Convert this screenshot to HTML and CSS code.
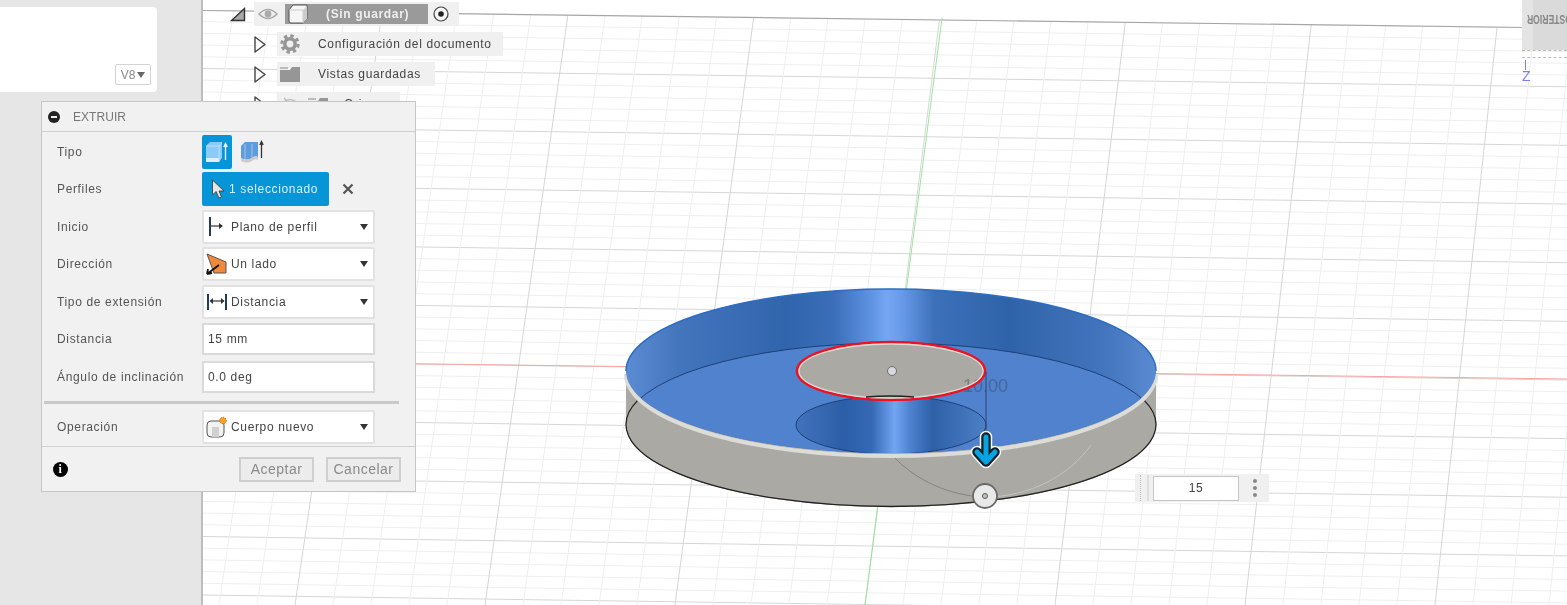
FILE: index.html
```html
<!DOCTYPE html>
<html lang="es">
<head>
  <meta charset="UTF-8">
  <title>Extruir</title>
  <link rel="stylesheet" href="styles.css">
</head>
<body>
  <div class="app">
    <aside class="sidebar">
      <div class="thumb">
        <div class="version">V8<span class="caret-small"></span></div>
      </div>
    </aside>

    <main class="canvas">
      <svg class="scene" width="1364" height="605" viewBox="203 0 1364 605">
        <defs>
          <clipPath id="gridClip"><polygon points="203,10.5 1567,28 1567,605 203,605"/></clipPath>
          <clipPath id="rimClip"><ellipse cx="891" cy="371" rx="265" ry="82"/></clipPath>
          <linearGradient id="wall" gradientUnits="userSpaceOnUse" x1="627" y1="0" x2="1157" y2="0">
            <stop offset="0" stop-color="#5b8bd3"/>
            <stop offset="0.1" stop-color="#4375bd"/>
            <stop offset="0.3" stop-color="#3064ab"/>
            <stop offset="0.39" stop-color="#3a6eb8"/>
            <stop offset="0.46" stop-color="#5e93e2"/>
            <stop offset="0.49" stop-color="#74a6f3"/>
            <stop offset="0.52" stop-color="#669ae8"/>
            <stop offset="0.58" stop-color="#3c70b9"/>
            <stop offset="0.72" stop-color="#2f63a9"/>
            <stop offset="0.9" stop-color="#4275bd"/>
            <stop offset="1" stop-color="#5b8bd3"/>
          </linearGradient>
          <linearGradient id="bore" gradientUnits="userSpaceOnUse" x1="796" y1="0" x2="986" y2="0">
            <stop offset="0" stop-color="#4272bb"/>
            <stop offset="0.25" stop-color="#2c5ea8"/>
            <stop offset="0.4" stop-color="#3569b5"/>
            <stop offset="0.52" stop-color="#72a5f2"/>
            <stop offset="0.6" stop-color="#4e82d0"/>
            <stop offset="0.72" stop-color="#2e60a8"/>
            <stop offset="1" stop-color="#4e80c6"/>
          </linearGradient>
        </defs>

        <g id="grid" clip-path="url(#gridClip)"></g>
        <line x1="203" y1="10.5" x2="1567" y2="28" class="grid-top"/>
        <line x1="203" y1="361" x2="1567" y2="379" class="axis-red"/>
        <line x1="942" y1="18" x2="865" y2="605" class="axis-green"/>

        <!-- cuerpo -->
        <path class="body" d="M626 371 V425 A265 82 0 0 0 1156 425 V371 Z"/>
        <ellipse class="body" cx="891" cy="425" rx="265" ry="82"/>
        <path class="body-edge" d="M637.5 400.6 A265 82 0 1 0 1144.5 400.6"/>
        <path class="sweep-dark" d="M893 456 C915 480 950 496 985 497"/>
        <path class="sweep" d="M985 497 C1030 497 1070 475 1091 445"/>

        <!-- extrusion -->
        <path class="rim-light" d="M626 374 A265 82 0 0 0 1156 374"/>
        <ellipse cx="891" cy="371" rx="265" ry="82" fill="url(#wall)"/>
        <g clip-path="url(#rimClip)">
          <ellipse class="floor" cx="891" cy="425" rx="265" ry="82"/>
          <ellipse class="bore" cx="891" cy="425" rx="95" ry="29" fill="url(#bore)"/>
        </g>
        <path class="rim" d="M626 371 A265 82 0 0 1 1156 371"/>

        <!-- agujero -->
        <ellipse class="hole" cx="891" cy="371" rx="94" ry="29"/>
        <text x="963" y="392" class="dimension">10.00</text>
        <ellipse class="hole-ring" cx="891" cy="371" rx="94" ry="29"/>
        <ellipse class="hole-inner" cx="891" cy="371" rx="92" ry="27"/>
        <path class="hole-shadow" d="M866 397 Q890 395 914 397"/>
        <circle class="center-dot" cx="892" cy="371" r="4.5"/>

        <!-- cota y manipulador -->
        <line x1="986" y1="372" x2="986" y2="432" class="dimension-line"/>
        <path class="arrow-halo" d="M986 437 V460 M977 452 L986 462 L995 452"/>
        <path class="arrow-line" d="M986 437 V460 M977 452 L986 462 L995 452"/>
        <path class="arrow" d="M986 437 V460 M977 452 L986 462 L995 452"/>
        <circle class="knob" cx="985" cy="496" r="12"/>
        <circle class="knob-dot" cx="985" cy="496" r="2.6"/>
      </svg>

      <ul class="tree">
        <li class="tree-row tree-root">
          <svg class="tw-open" width="16" height="15" viewBox="0 0 16 15"><path d="M14.5 1.5 V13.5 H1.5 Z" fill="#a8a8a8" stroke="#333" stroke-width="1.4"/></svg>
          <div class="chip">
            <svg width="20" height="14" viewBox="0 0 20 14"><path d="M1 7 Q10 -2 19 7 Q10 16 1 7 Z" fill="none" stroke="#aaa" stroke-width="1.6"/><circle cx="10" cy="7" r="3.4" fill="#aaa"/></svg>
            <div class="root-name">
              <svg width="24" height="20" viewBox="0 0 24 20"><path d="M4 6 L8 1 H22 V15 L18 19 H6 Q4 19 4 17 Z" fill="#f6f6f6" stroke="#555"/><path d="M18 6 H22 V2 Z M18 6 V19 L22 15 V6 Z" fill="#ccc"/><path d="M4 6 H18 V19" fill="none" stroke="#ccc"/></svg>
              <span>(Sin guardar)</span>
            </div>
            <svg class="radio" width="16" height="16" viewBox="0 0 16 16"><circle cx="8" cy="8" r="7" fill="#f6f6f6" stroke="#444" stroke-width="1.2"/><circle cx="8" cy="8" r="2.8" fill="#222"/></svg>
          </div>
        </li>
        <li class="tree-row">
          <svg class="tw" width="12" height="17" viewBox="0 0 12 17"><path d="M1 1 L11 8.5 L1 16 Z" fill="#fff" stroke="#444" stroke-width="1.4" stroke-linejoin="round"/></svg>
          <div class="chip">
            <svg class="node-icon" width="20" height="20" viewBox="0 0 20 20"><circle cx="10" cy="10" r="5.2" fill="none" stroke="#969696" stroke-width="3.6"/><circle cx="10" cy="10" r="8.2" fill="none" stroke="#969696" stroke-width="3" stroke-dasharray="3.4 3.04"/></svg>
            <span>Configuración del documento</span>
          </div>
        </li>
        <li class="tree-row">
          <svg class="tw" width="12" height="17" viewBox="0 0 12 17"><path d="M1 1 L11 8.5 L1 16 Z" fill="#fff" stroke="#444" stroke-width="1.4" stroke-linejoin="round"/></svg>
          <div class="chip chip-views">
            <svg class="node-icon" width="20" height="16" viewBox="0 0 20 16"><path d="M0 1 H8 V3 H0 Z" fill="#bbb"/><path d="M0 4 H10 L12 1 H20 V16 H0 Z" fill="#969696"/></svg>
            <span>Vistas guardadas</span>
          </div>
        </li>
        <li class="tree-row">
          <svg class="tw" width="12" height="17" viewBox="0 0 12 17"><path d="M1 1 L11 8.5 L1 16 Z" fill="#fff" stroke="#444" stroke-width="1.4" stroke-linejoin="round"/></svg>
          <div class="chip chip-origin">
            <svg width="20" height="14" viewBox="0 0 20 14"><path d="M1 7 Q10 -2 19 7 Q10 16 1 7 Z M4 1 L16 13" fill="none" stroke="#bbb" stroke-width="1.2"/></svg>
            <svg width="20" height="14" viewBox="0 0 20 14"><path d="M0 1 H8 V3 H0 Z" fill="#bbb"/><path d="M0 4 H10 L12 1 H20 V14 H0 Z" fill="#969696"/></svg>
            <span>Origen</span>
          </div>
        </li>
      </ul>

      <div class="viewcube">
        <div class="cube-face"><span>POSTERIOR</span></div>
        <div class="cube-foot"></div>
        <div class="cube-z"><i></i>Z</div>
      </div>

      <div class="quick-input">
        <div class="grip"></div>
        <div class="quick-field">15</div>
        <div class="quick-dots"><i></i><i></i><i></i></div>
      </div>
    </main>

    <section class="dialog">
      <header class="dialog-head">
        <span class="collapse"></span>
        <span>EXTRUIR</span>
      </header>

      <div class="dialog-body">
        <div class="row">
          <label>Tipo</label>
          <div class="field tipo">
            <button class="tool-btn">
              <svg width="24" height="24" viewBox="0 0 24 24"><path d="M1 6 L5 2 H17 V18 L14 22 H1 Z" fill="#8ccbf8"/><path d="M1 18 H14 V22 H1 Z" fill="#dff1fc"/><path d="M14 6 H1 M14 6 V22 M14 6 L17 2" fill="none" stroke="#c5e6fa" stroke-width="0.8"/><path d="M20.5 20 V5 M18.8 7 L20.5 3.5 L22.2 7" fill="none" stroke="#fff" stroke-width="1.3"/></svg>
            </button>
            <svg class="tool-off" width="24" height="24" viewBox="0 0 24 24"><path d="M1 6 L5 2 H18 V17 Q15 15 12 18 Q7 21 1 18 Z" fill="#5f9cdd"/><path d="M1 18 Q7 21 12 18 Q15 15 18 17 V20 Q15 18 12 21 Q7 24 1 21 Z" fill="#ccc"/><path d="M5 4 V19 M12 4 V18" stroke="#9cc6ef"/><path d="M21.5 18 V3 M19.8 5 L21.5 1.5 L23.2 5" fill="none" stroke="#333" stroke-width="1.3"/></svg>
          </div>
        </div>

        <div class="row">
          <label>Perfiles</label>
          <div class="field">
            <button class="picked">
              <svg width="14" height="20" viewBox="0 0 14 20"><path d="M1.5 1 V16 L5 12.5 L8 19 L10.5 18 L8 12 H13 Z" fill="#e6e6e6" stroke="#444" stroke-width="0.9"/></svg>
              <span>1 seleccionado</span>
            </button>
            <svg class="clear" width="12" height="12" viewBox="0 0 12 12"><path d="M1.5 1.5 L10.5 10.5 M10.5 1.5 L1.5 10.5" stroke="#555" stroke-width="2.2"/></svg>
          </div>
        </div>

        <div class="row">
          <label>Inicio</label>
          <div class="select">
            <svg width="22" height="22" viewBox="0 0 22 22"><path d="M4 1 V20" stroke="#1f3a68" stroke-width="2"/><path d="M5 10 H14" stroke="#333" stroke-width="1.2"/><path d="M13 7 L17 10 L13 13 Z" fill="#333"/></svg>
            <span>Plano de perfil</span>
            <i class="caret"></i>
          </div>
        </div>

        <div class="row">
          <label>Dirección</label>
          <div class="select">
            <svg width="22" height="22" viewBox="0 0 22 22"><path d="M1 1 L20 9 V20 H8 Z" fill="#f0893c" stroke="#555"/><path d="M1 21 L13 12 M1 21 L2 16 M1 21 L6 20" fill="none" stroke="#111" stroke-width="1.8"/></svg>
            <span>Un lado</span>
            <i class="caret"></i>
          </div>
        </div>

        <div class="row">
          <label>Tipo de extensión</label>
          <div class="select">
            <svg width="22" height="22" viewBox="0 0 22 22"><path d="M2 3 V19 M20 3 V19" stroke="#1f3a68" stroke-width="2"/><path d="M4 10 H18" stroke="#333" stroke-width="1.2"/><path d="M7 7 L3.5 10 L7 13 Z M15 7 L18.5 10 L15 13 Z" fill="#333"/></svg>
            <span>Distancia</span>
            <i class="caret"></i>
          </div>
        </div>

        <div class="row">
          <label>Distancia</label>
          <div class="input">15 mm</div>
        </div>

        <div class="row">
          <label>Ángulo de inclinación</label>
          <div class="input">0.0 deg</div>
        </div>

        <div class="separator"></div>

        <div class="row">
          <label>Operación</label>
          <div class="select">
            <svg width="22" height="22" viewBox="0 0 22 22"><rect x="1" y="5" width="17" height="16" rx="4" fill="#f2f2f2" stroke="#555"/><rect x="6" y="11" width="7" height="10" fill="#d0d0d0"/><circle cx="17" cy="4.5" r="3.2" fill="#f6a623" stroke="#e2531c" stroke-dasharray="1.4 1"/></svg>
            <span>Cuerpo nuevo</span>
            <i class="caret"></i>
          </div>
        </div>
      </div>

      <footer class="dialog-foot">
        <span class="info">i</span>
        <button class="btn">Aceptar</button>
        <button class="btn btn-cancel">Cancelar</button>
      </footer>
    </section>
  </div>

  <script>
    // rejilla en perspectiva: cada 5 lineas una mayor
    const grid = document.getElementById('grid');

    function addLine(x1, y1, x2, y2, major) {
      const line = document.createElementNS('http://www.w3.org/2000/svg', 'line');
      line.setAttribute('x1', x1);
      line.setAttribute('y1', y1);
      line.setAttribute('x2', x2);
      line.setAttribute('y2', y2);
      line.setAttribute('class', major ? 'grid-major' : 'grid-minor');
      grid.appendChild(line);
    }

    for (let k = -30; k <= 20; k++) {
      addLine(203, 361 + k * 11.7, 1567, 380 + k * 11.73, k % 5 === 0);
    }
    for (let k = -20; k <= 20; k++) {
      addLine(942 + k * 37.2, 0, 865 + k * 38, 605, k % 5 === 0);
    }
  </script>
</body>
</html>
```

FILE: styles.css
```css
* {
  box-sizing: border-box;
}

html, body {
  margin: 0;
  height: 100%;
  overflow: hidden;
}

body {
  font-family: "Liberation Sans", Arial, sans-serif;
  font-size: 12px;
  letter-spacing: 0.65px;
  color: #555;
  background: #fff;
}

.app {
  position: relative;
  display: flex;
  width: 1567px;
  height: 605px;
  overflow: hidden;
  filter: blur(0.5px);
}

/* lateral */
.sidebar {
  width: 203px;
  flex: none;
  padding-top: 7px;
  background: #e6e6e6;
  border-right: 2px solid #bdbdbd;
}

.thumb {
  display: flex;
  align-items: flex-end;
  justify-content: flex-end;
  width: 157px;
  height: 85px;
  padding: 0 6px 7px 0;
  background: #fff;
  border-radius: 0 4px 4px 0;
}

.version {
  display: flex;
  align-items: center;
  justify-content: center;
  gap: 2px;
  width: 36px;
  height: 21px;
  color: #888;
  letter-spacing: 0;
  background: #fff;
  border: 1px solid #d4d4d4;
  border-radius: 2px;
}

.caret-small {
  border-left: 4px solid transparent;
  border-right: 4px solid transparent;
  border-top: 6px solid #666;
}

/* vista 3d */
.canvas {
  position: relative;
  flex: 1;
  overflow: hidden;
  background: #fff;
}

.scene {
  display: block;
}

.grid-major { stroke: #d6d6d6; stroke-width: 1; }
.grid-minor { stroke: #efefef; stroke-width: 1; }
.grid-top { stroke: #a6a6a6; stroke-width: 1.2; }
.axis-red { stroke: #f7a3a3; stroke-width: 1; }
.axis-green { stroke: #9be59b; stroke-width: 1; }

.body { fill: #aaa9a3; }
.body-edge { fill: none; stroke: #222; stroke-width: 1.3; }
.sweep { fill: none; stroke: #c4c4c0; stroke-width: 1; }
.sweep-dark { fill: none; stroke: #85857f; stroke-width: 1; }
.rim-light { fill: none; stroke: #dcdcd8; stroke-width: 4; }
.floor { fill: #5182cd; stroke: #1d3f78; stroke-width: 1; }
.bore { stroke: #1d3f78; stroke-width: 1; }
.rim { fill: none; stroke: #2b6cc4; stroke-width: 1.5; }
.hole { fill: #aaa9a3; }
.hole-ring { fill: none; stroke: #f01020; stroke-width: 2.6; }
.hole-inner { fill: none; stroke: #d8d8d4; stroke-width: 1.4; }
.hole-shadow { fill: none; stroke: #222; stroke-width: 1.5; }
.center-dot { fill: #d8d8e0; stroke: #6b6b72; stroke-width: 1; }

.dimension {
  font-family: "Liberation Sans", Arial, sans-serif;
  font-size: 18px;
  letter-spacing: 0;
  fill: rgba(50, 60, 80, 0.4);
}

.dimension-line { stroke: #2a4576; stroke-width: 1; }
.arrow-halo, .arrow-line, .arrow { fill: none; stroke-linecap: round; stroke-linejoin: round; }
.arrow-halo { stroke: #f4f4f4; stroke-width: 12.5; }
.arrow-line { stroke: #14202b; stroke-width: 9.5; }
.arrow { stroke: #06a5e2; stroke-width: 5; }
.knob { fill: #e9e9ea; stroke: #6a6a6a; stroke-width: 1.8; }
.knob-dot { fill: #bbb; stroke: #666; stroke-width: 1; }

/* navegador */
.tree {
  position: absolute;
  top: 2px;
  left: 0;
  margin: 0;
  padding: 0;
  list-style: none;
  font-size: 12px;
  color: #444;
}

.tree-row {
  display: flex;
  align-items: center;
  gap: 11px;
  height: 24px;
  margin: 6px 0 0 51px;
}

.tree-root {
  margin: 0 0 0 27px;
  gap: 8px;
}

.chip {
  display: flex;
  align-items: center;
  height: 24px;
  padding: 0 11px 0 3px;
  background: #f0f0f0;
}

.chip > span {
  margin-left: 18px;
}

.chip-views {
  padding-right: 14px;
}

.node-icon {
  flex: none;
}

.tree-root .chip {
  gap: 7px;
  padding: 0 10px 0 4px;
}

.root-name {
  display: flex;
  align-items: center;
  width: 143px;
  height: 20px;
  color: #eee;
  font-weight: bold;
  background: #9a9a9a;
}

.root-name span {
  margin-left: 17px;
}

.radio {
  margin-left: -2px;
}

.chip-origin {
  gap: 8px;
  width: 123px;
}

.chip-origin > span {
  margin-left: 8px;
}

/* viewcube */
.viewcube {
  position: absolute;
  top: 0;
  left: 1319px;
  width: 45px;
}

.cube-face {
  height: 50px;
  padding: 12px 0 0 1px;
  overflow: hidden;
  background: linear-gradient(90deg, #e4e4e4 11px, #dadada 11px);
}

.cube-face span {
  display: block;
  width: max-content;
  margin-left: -6.5px;
  font-size: 12px;
  font-weight: bold;
  color: #888;
  letter-spacing: 0;
  transform: rotate(180deg) scaleX(0.72);
}

.cube-foot {
  height: 8px;
  border-top: 1px dashed #bbb;
  border-bottom: 1px dashed #bbb;
}

.cube-z {
  display: flex;
  flex-direction: column;
  width: 9px;
  margin-top: 2px;
  font-size: 14px;
  line-height: 13px;
  color: #7c7cf0;
  letter-spacing: 0;
}

.cube-z i {
  width: 1px;
  height: 10px;
  margin-left: 3px;
  background: #7c7cf0;
}

/* caja de valor */
.quick-input {
  position: absolute;
  top: 474px;
  left: 932px;
  display: flex;
  align-items: center;
  width: 134px;
  height: 28px;
  background: #f0f0f0;
}

.grip {
  width: 9px;
  height: 26px;
  margin: 0 4px 0 5px;
  border-left: 1px dotted #bbb;
  border-right: 2px solid #ddd;
}

.quick-field {
  width: 86px;
  height: 25px;
  font-size: 12px;
  line-height: 22px;
  text-align: center;
  color: #444;
  background: #fff;
  border: 1px solid #c6c6c6;
}

.quick-dots {
  display: flex;
  flex-direction: column;
  gap: 3px;
  margin-left: 14px;
}

.quick-dots i {
  width: 4px;
  height: 4px;
  background: #888;
  border-radius: 50%;
}

/* dialogo */
.dialog {
  position: absolute;
  top: 101px;
  left: 41px;
  width: 375px;
  height: 391px;
  background: #f1f1f1;
  border: 1px solid #c6c6c6;
}

.dialog-head {
  display: flex;
  align-items: center;
  gap: 13px;
  height: 30px;
  padding-left: 6px;
  color: #777;
  letter-spacing: 0.05px;
  border-bottom: 1px solid #cfcfcf;
}

.collapse {
  position: relative;
  width: 12px;
  height: 12px;
  background: #222;
  border-radius: 50%;
}

.collapse::after {
  content: "";
  position: absolute;
  top: 5px;
  left: 3px;
  width: 6px;
  height: 2px;
  background: #eee;
}

.dialog-body {
  padding-top: 1px;
}

.row {
  display: flex;
  align-items: center;
  height: 37.5px;
  padding-left: 15px;
}

.row label {
  width: 145px;
  flex: none;
  color: #555;
}

.field {
  display: flex;
  align-items: center;
}

.tool-btn {
  display: flex;
  align-items: center;
  justify-content: center;
  width: 30px;
  height: 34px;
  padding: 0;
  background: #0696d7;
  border: 0;
  border-radius: 2px;
}

.tool-off {
  margin-left: 8px;
}

.picked {
  display: flex;
  align-items: center;
  gap: 4px;
  width: 127px;
  height: 34px;
  padding: 0 0 0 9px;
  font: inherit;
  letter-spacing: inherit;
  color: #d8f0fb;
  background: #0696d7;
  border: 0;
  border-radius: 2px;
}

.clear {
  margin-left: 13px;
}

.select {
  display: flex;
  align-items: center;
  gap: 3px;
  width: 173px;
  height: 34px;
  padding: 0 5px 0 2px;
  color: #444;
  background: #fff;
  border: 2px solid #e2e2e2;
  border-radius: 2px;
}

.select svg {
  flex: none;
}

.select span {
  flex: 1;
}

.caret {
  border-left: 4px solid transparent;
  border-right: 4px solid transparent;
  border-top: 6px solid #333;
}

.input {
  width: 173px;
  height: 32px;
  padding-left: 4px;
  line-height: 28px;
  color: #444;
  background: #fff;
  border: 2px solid #dadada;
}

.separator {
  height: 3px;
  margin: 5px 16px 5px 2px;
  background: #c9c9c9;
}

.dialog-foot {
  display: flex;
  align-items: center;
  height: 45px;
  padding: 0 14px 0 11px;
  border-top: 1px solid #cfcfcf;
}

.info {
  width: 15px;
  height: 15px;
  margin-right: auto;
  font: bold 12px/15px "Liberation Serif", serif;
  text-align: center;
  color: #fff;
  background: #000;
  border-radius: 50%;
}

.btn {
  width: 75px;
  height: 25px;
  padding: 0;
  font: 14px "Liberation Sans", Arial, sans-serif;
  letter-spacing: 0.5px;
  color: #8a8a8a;
  background: #ececec;
  border: 2px solid #cfcfcf;
}

.btn-cancel {
  margin-left: 12px;
}
```
